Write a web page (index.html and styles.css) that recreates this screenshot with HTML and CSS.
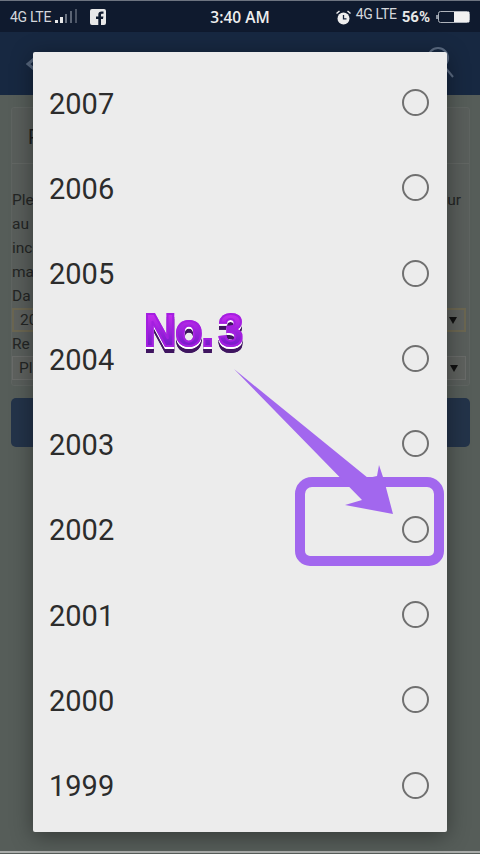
FILE: index.html
```html
<!DOCTYPE html>
<html lang="en">
<head>
<meta charset="utf-8">
<title>Select year</title>
<link rel="stylesheet" href="styles.css">
</head>
<body>
<div class="screen">
  <header class="status">
    <div class="status-left">
      <span class="net">4G LTE</span>
      <svg class="signal" width="24" height="16" viewBox="0 0 24 16"><rect x="0" y="11" width="3" height="3" fill="#e8e8e8"/><rect x="5" y="8" width="3" height="6" fill="#e8e8e8"/><rect x="10" y="5" width="2" height="9" fill="#6b7482"/><rect x="15" y="2" width="2" height="12" fill="#5b6474"/><rect x="20" y="0" width="2" height="14" fill="#4b5464"/></svg>
      <svg class="fb" width="16" height="16" viewBox="0 0 16 16"><path d="M2 0h12a2 2 0 0 1 2 2v12a2 2 0 0 1-2 2h-3V10h2l.4-2.6H11V6c0-.8.3-1.2 1.3-1.2h1.2V2.6c-.5-.1-1.2-.2-2-.2-2 0-3.2 1.100-3.200 3.200v1.800H6V10h2.300v6H2a2 2 0 0 1-2-2V2a2 2 0 0 1 2-2z" fill="#e8e8e8"/></svg>
    </div>
    <span class="clock">3:40 AM</span>
    <div class="status-right">
      <svg width="15" height="15" viewBox="0 0 15 15"><circle cx="7.500" cy="8.500" r="6" fill="#eee"/><path d="M7.500 5v3.800h3" fill="none" stroke="#16233a" stroke-width="1.300"/><path d="M0.500 3.500l3-2.500M14.500 3.500l-3-2.500" stroke="#eee" stroke-width="1.500"/></svg>
      <span class="net net-up">4G LTE</span>
      <span class="pct">56%</span>
      <svg class="batt" width="34" height="14" viewBox="0 0 34 14"><rect x="2.500" y="1.500" width="31" height="11" rx="2" fill="none" stroke="#aeb3bb" stroke-width="1"/><rect x="0" y="5" width="2" height="4" fill="#8b93a0"/><rect x="18" y="2" width="15" height="10" fill="#f1f1f1"/></svg>
    </div>
  </header>
  <div class="appbar">
    <svg class="back" width="8" height="12" viewBox="0 0 8 12"><path d="M8 1L2 6l6 5" fill="none" stroke="#55657c" stroke-width="3"/></svg>
    <svg class="search" width="30" height="34" viewBox="0 0 30 34"><circle cx="11" cy="12" r="10" fill="none" stroke="#5b6b82" stroke-width="2"/><path d="M17 20l9 11" stroke="#5b6b82" stroke-width="2"/></svg>
  </div>
  <main class="page">
    <section class="card">
      <div class="card-head">P</div>
      <div class="card-body">
        <div class="line"><span>Ple</span><span>ur</span></div>
        <div class="line"><span>au</span></div>
        <div class="line"><span>inc</span></div>
        <div class="line"><span>ma</span></div>
        <div class="line"><span>Da</span></div>
        <div class="select select-active"><span>20</span><i class="caret"></i></div>
        <div class="line"><span>Re</span></div>
        <div class="select"><span>Pl</span><i class="caret"></i></div>
      </div>
    </section>
    <div class="submit"></div>
  </main>
  <div class="bottom-line"></div>

  <div class="dialog">
    <div class="row"><span>2007</span><i class="radio"></i></div>
    <div class="row"><span>2006</span><i class="radio"></i></div>
    <div class="row"><span>2005</span><i class="radio"></i></div>
    <div class="row"><span>2004</span><i class="radio"></i></div>
    <div class="row"><span>2003</span><i class="radio"></i></div>
    <div class="row"><span>2002</span><i class="radio"></i></div>
    <div class="row"><span>2001</span><i class="radio"></i></div>
    <div class="row"><span>2000</span><i class="radio"></i></div>
    <div class="row"><span>1999</span><i class="radio"></i></div>
  </div>

  <div class="note">No. 3</div>
  <div class="mark"></div>
  <svg class="arrow" width="170" height="150" viewBox="0 0 170 150"><path d="M2 1L136 110 145 108 147 97 152 112 161 146 113 137 130 132Z" fill="#a267ee"/></svg>
</div>
</body>
</html>
```
FILE: styles.css
```css
* { box-sizing: border-box; }
html, body { margin: 0; padding: 0; }
body { width: 480px; height: 854px; overflow: hidden; background: #565d59; font-family: "Roboto", "Liberation Sans", sans-serif; }
.screen { position: relative; width: 480px; height: 854px; display: flex; flex-direction: column; overflow: hidden; }

.status { height: 32px; flex: none; display: grid; grid-template-columns: 1fr auto 1fr; align-items: center; padding: 1px 10px 0 10px; background: #0f1a2e; border-top: 1px solid #6d7480; color: #e8e8e8; }
.status-left { display: flex; align-items: center; }
.status-right { display: flex; align-items: center; justify-content: flex-end; }
.net { font-size: 14px; letter-spacing: -0.300px; color: #d4d7dc; }
.net-up { margin: -6px 0 0 5px; }
.signal { margin-left: 4px; }
.fb { margin-left: 11px; }
.clock { font-family: "Open Sans", "Liberation Sans", sans-serif; font-size: 15.500px; font-weight: 600; color: #eeeeee; }
.pct { margin-left: 5px; font-size: 15px; font-weight: 700; color: #e8e8e8; }
.batt { margin-left: 6px; }

.appbar { height: 63px; flex: none; display: flex; justify-content: space-between; align-items: flex-start; padding: 14px 23px 0 26px; background: #172841; }
.back { margin-top: 12px; }
.search { margin-top: 0; }

.page { flex: 1; padding: 12px 10px 0 11px; background: #565d59; }
.card { background: #595e5b; border: 1px solid #5f6461; border-radius: 3px; height: 279px; }
.card-head { height: 56px; line-height: 58px; padding-left: 16px; font-size: 20px; color: #1b1d1d; border-bottom: 1px solid #626663; }
.card-body { padding-top: 24px; color: #232524; font-size: 15.500px; line-height: 24px; }
.line { height: 24px; display: flex; justify-content: space-between; padding-right: 8px; }
.select { height: 24px; margin-right: 3px; border: 1px solid #696b69; background: #5e615e; display: flex; justify-content: space-between; align-items: center; padding: 0 7px 0 6px; font-size: 15.500px; }
.select-active { border: 2px solid #6b6651; }
.caret { width: 0; height: 0; border-left: 4px solid transparent; border-right: 4px solid transparent; border-top: 7px solid #111; }
.submit { margin-top: 12px; height: 49px; background: #233349; border-radius: 5px; }
.bottom-line { height: 2px; flex: none; background: #a9acaa; margin-bottom: 1px; }

.dialog { position: absolute; left: 33px; top: 52px; width: 414px; height: 780px; padding: 8px 0 4px; background: #ececec; border-radius: 2px; box-shadow: 0 4px 22px rgba(0,0,0,.4); display: flex; flex-direction: column; }
.row { flex: 1; display: flex; justify-content: space-between; align-items: center; padding: 0 18px 0 16px; font-size: 29px; color: #2c2c2c; }
.row span { margin-top: 2px; }
.radio { width: 27px; height: 27px; border-radius: 50%; border: 2.500px solid #707070; }

.note { position: absolute; left: 144px; top: 302px; white-space: nowrap; font-family: "Liberation Sans", sans-serif; font-weight: 700; font-size: 46px; line-height: 56px; letter-spacing: -1px; word-spacing: -6px; transform: scaleX(.97); transform-origin: left center; background: linear-gradient(180deg, #c92cf0 20%, #7a1ccb 75%); -webkit-background-clip: text; background-clip: text; color: transparent; -webkit-text-stroke: 2px #a41fe0; filter: drop-shadow(0 2px 0 #fff) drop-shadow(0 4px 0 #3f1560); }
.mark { position: absolute; left: 295px; top: 477px; width: 149px; height: 89px; border: 10px solid #a267ee; border-radius: 17px 17px 15px 15px; }
.arrow { position: absolute; left: 232px; top: 368px; }
```
